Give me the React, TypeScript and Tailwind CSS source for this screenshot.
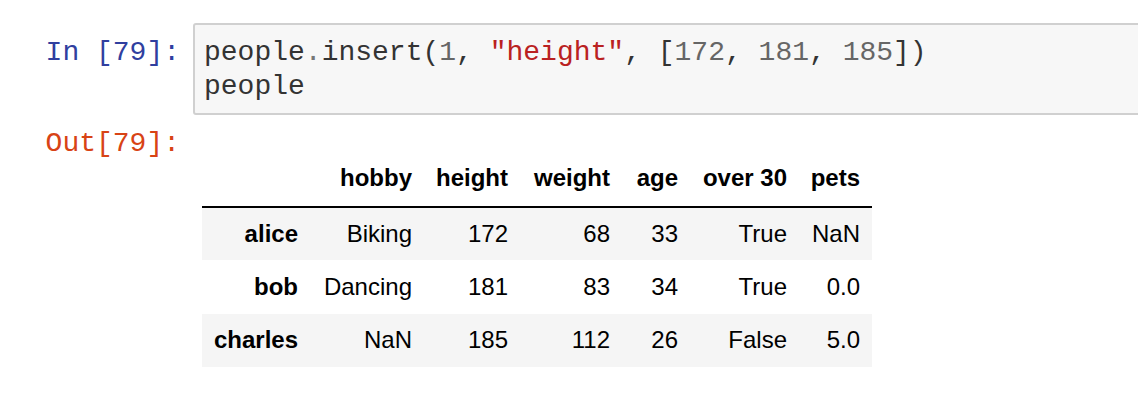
import React from 'react';

const mono = { fontFamily: '"Liberation Mono", "DejaVu Sans Mono", monospace' };

type Row = { name: string; cells: string[]; shaded: boolean };

const columns = ['hobby', 'height', 'weight', 'age', 'over 30', 'pets'];
const widths = ['w-[114px]', 'w-[96px]', 'w-[102px]', 'w-[68px]', 'w-[109px]', 'w-[73px]'];

const rows: Row[] = [
  { name: 'alice', cells: ['Biking', '172', '68', '33', 'True', 'NaN'], shaded: true },
  { name: 'bob', cells: ['Dancing', '181', '83', '34', 'True', '0.0'], shaded: false },
  { name: 'charles', cells: ['NaN', '185', '112', '26', 'False', '5.0'], shaded: true },
];

const Prompt: React.FC<{ text: string; color: string }> = ({ text, color }) => (
  <div
    className={`w-[193px] shrink-0 pr-[13px] text-right text-[28px] leading-[34px] whitespace-pre ${color}`}
    style={mono}
  >
    {text}
  </div>
);

const DataFrame: React.FC = () => (
  <table
    className="table-fixed w-[670px] border-collapse text-[24px] text-black"
    style={{ fontFamily: '"Liberation Sans", Arial, Helvetica, sans-serif' }}
  >
    <thead>
      <tr className="h-[55px] border-b-2 border-black">
        <th className="w-[108px] pr-[12px]"></th>
        {columns.map((c, i) => (
          <th key={c} className={`${widths[i]} pr-[12px] pb-[2px] text-right font-bold whitespace-nowrap`}>
            {c}
          </th>
        ))}
      </tr>
    </thead>
    <tbody>
      {rows.map((r) => (
        <tr key={r.name} className={`h-[53.4px] ${r.shaded ? 'bg-[#f5f5f5]' : 'bg-white'}`}>
          <th className="pr-[12px] text-right font-bold">{r.name}</th>
          {r.cells.map((v, i) => (
            <td key={i} className="pr-[12px] text-right font-normal">
              {v}
            </td>
          ))}
        </tr>
      ))}
    </tbody>
  </table>
);

export default function App() {
  return (
    <div className="w-[1138px] h-[408px] overflow-hidden bg-white">
      <div className="pt-[23px]">
        <div className="flex">
          <div className="pt-[13px]">
            <Prompt text="In [79]:" color="text-[#303f9f]" />
          </div>
          <div
            className="flex-1 -mr-8 rounded-[3px] border-2 border-[#d0d0d0] bg-[#f7f7f7] pl-[9px] pt-[11px] pb-[9px] text-[28px] leading-[34px] text-[#333] whitespace-pre"
            style={mono}
          >
            <div>
              people<span className="text-[#777]">.</span>insert(<span className="text-[#666]">1</span>,{' '}
              <span className="text-[#ba2121]">"height"</span>, [<span className="text-[#666]">172</span>,{' '}
              <span className="text-[#666]">181</span>, <span className="text-[#666]">185</span>])
            </div>
            <div>people</div>
          </div>
        </div>

        <div className="mt-[12px] flex">
          <Prompt text="Out[79]:" color="text-[#d84315]" />
          <div className="ml-[9px] mt-[25px]">
            <DataFrame />
          </div>
        </div>
      </div>
    </div>
  );
}
